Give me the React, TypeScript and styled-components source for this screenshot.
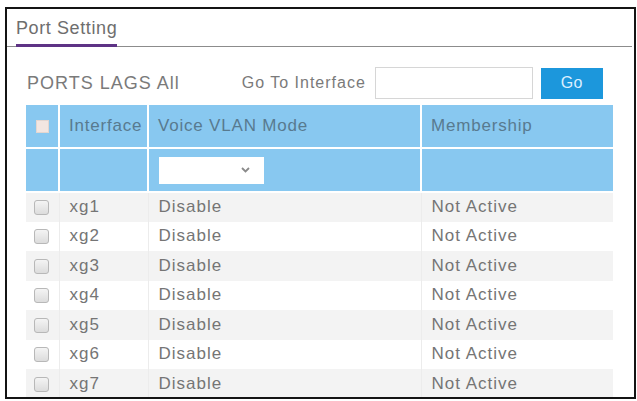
import React from "react";
import styled, { createGlobalStyle } from "styled-components";

const GlobalStyle = createGlobalStyle`
  html, body {
    margin: 0;
    padding: 0;
    background: #fff;
  }
  body {
    font-family: "Liberation Sans", Arial, sans-serif;
    overflow: hidden;
  }
`;

const Frame = styled.div`
  margin: 7px 0 0 5px;
  width: 627px;
  height: 388px;
  border: 2px solid #141414;
  overflow: hidden;
  background: #fff;
`;

const TabBar = styled.div`
  display: flex;
  padding-left: 9px;
  border-bottom: 1px solid #8c8c8c;
  margin-right: 2px;
`;

const Tab = styled.div`
  padding: 9px 0 6px;
  margin-bottom: -1px;
  font-size: 18px;
  line-height: 20px;
  letter-spacing: 0.6px;
  color: #6e6e6e;
  border-bottom: 3px solid #5e3385;
`;

const Toolbar = styled.div`
  display: flex;
  align-items: center;
  height: 32px;
  margin-top: 20px;
  padding-left: 20px;
`;

const Label = styled.span<{ $size: number; $gap?: number }>`
  font-size: ${(p) => p.$size}px;
  letter-spacing: 1px;
  color: #7a7a7a;
  margin-left: ${(p) => p.$gap ?? 0}px;
  white-space: nowrap;
`;

const TextInput = styled.input`
  box-sizing: border-box;
  width: 158px;
  height: 32px;
  margin-left: 9px;
  border: 1px solid #d6d6d6;
  background: #fff;
  outline: none;
`;

const GoButton = styled.button`
  width: 62px;
  height: 31px;
  margin-left: 8px;
  border: none;
  background: #1c97dc;
  color: #dcefff;
  font-family: "Liberation Sans", Arial, sans-serif;
  font-size: 16px;
  letter-spacing: 0.5px;
  padding: 0;
`;

const Table = styled.table`
  margin: 6px 0 0 19px;
  width: 587px;
  border-collapse: collapse;
  table-layout: fixed;
`;

const HeadRow = styled.tr<{ $h: number }>`
  height: ${(p) => p.$h}px;
`;

const HeadCell = styled.th`
  background: #88c8f0;
  border: 2px solid #fff;
  border-top: none;
  padding: 0 0 0 9px;
  text-align: left;
  font-weight: normal;
  font-size: 17px;
  letter-spacing: 0.8px;
  color: #587a8f;
  &:first-child {
    border-left: none;
    padding: 0;
    text-align: center;
  }
  &:last-child {
    border-right: none;
  }
`;

const Row = styled.tr<{ $shade: boolean }>`
  background: ${(p) => (p.$shade ? "#f3f3f3" : "#fff")};
  height: 29.5px;
`;

const Cell = styled.td`
  padding: 0 0 0 10px;
  border-left: 1px solid #ececec;
  font-size: 17px;
  letter-spacing: 1px;
  color: #757575;
  white-space: nowrap;
  &:first-child {
    border-left: none;
    padding: 0;
    text-align: center;
  }
`;

const HeadBox = styled.span`
  display: inline-block;
  width: 11px;
  height: 11px;
  vertical-align: middle;
  background: #f2e6e1;
  border: 1px solid #e3d6d0;
`;

const Box = styled.span`
  display: inline-block;
  box-sizing: border-box;
  width: 15px;
  height: 15px;
  margin-left: -2px;
  vertical-align: middle;
  border: 1px solid #b8b8b8;
  border-radius: 3px;
  background: linear-gradient(#f4f4f4, #dcdcdc);
`;

const Select = styled.div`
  display: flex;
  align-items: center;
  justify-content: flex-end;
  box-sizing: border-box;
  width: 105px;
  height: 27px;
  margin-left: 1px;
  padding-right: 14px;
  background: #fff;
`;

const rows = ["xg1", "xg2", "xg3", "xg4", "xg5", "xg6", "xg7"];

const Chevron = () => (
  <svg width="9" height="6" viewBox="0 0 9 6">
    <path d="M1 1 L4.5 4.5 L8 1" fill="none" stroke="#8a8a8a" strokeWidth="1.8" />
  </svg>
);

const App = () => {
  return (
    <>
      <GlobalStyle />
      <Frame>
        <TabBar>
          <Tab>Port Setting</Tab>
        </TabBar>

        <Toolbar>
          <Label $size={18}>PORTS LAGS All</Label>
          <Label $size={16} $gap={62}>
            Go To Interface
          </Label>
          <TextInput />
          <GoButton>Go</GoButton>
        </Toolbar>

        <Table>
          <colgroup>
            <col style={{ width: 33 }} />
            <col style={{ width: 89 }} />
            <col style={{ width: 273 }} />
            <col />
          </colgroup>
          <thead>
            <HeadRow $h={43}>
              <HeadCell>
                <HeadBox />
              </HeadCell>
              <HeadCell>Interface</HeadCell>
              <HeadCell>Voice VLAN Mode</HeadCell>
              <HeadCell>Membership</HeadCell>
            </HeadRow>
            <HeadRow $h={44}>
              <HeadCell />
              <HeadCell />
              <HeadCell>
                <Select>
                  <Chevron />
                </Select>
              </HeadCell>
              <HeadCell />
            </HeadRow>
          </thead>
          <tbody>
            {rows.map((name, i) => (
              <Row key={name} $shade={i % 2 === 0}>
                <Cell>
                  <Box />
                </Cell>
                <Cell>{name}</Cell>
                <Cell>Disable</Cell>
                <Cell>Not Active</Cell>
              </Row>
            ))}
          </tbody>
        </Table>
      </Frame>
    </>
  );
};

export default App;
